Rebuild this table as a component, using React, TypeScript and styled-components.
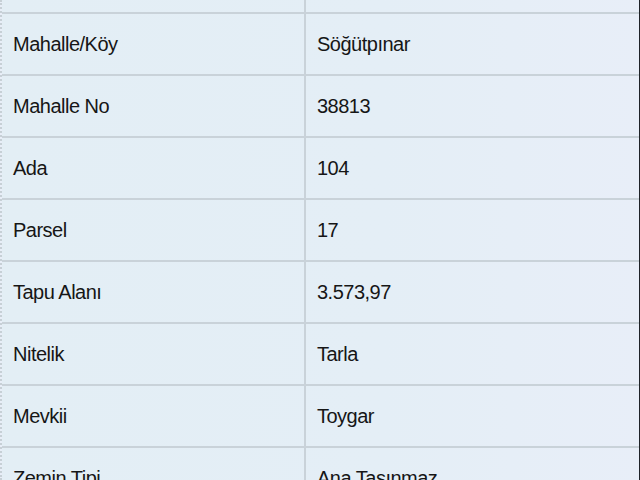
import styled, { createGlobalStyle } from "styled-components";

const GlobalStyle = createGlobalStyle`
	html, body {
		margin: 0;
		padding: 0;
		background: #e5eef6;
		overflow: hidden;
	}
	body {
		font-family: "Liberation Sans", Arial, sans-serif;
	}
`;

const rows: [string, string][] = [
	["", ""],
	["Mahalle/Köy", "Söğütpınar"],
	["Mahalle No", "38813"],
	["Ada", "104"],
	["Parsel", "17"],
	["Tapu Alanı", "3.573,97"],
	["Nitelik", "Tarla"],
	["Mevkii", "Toygar"],
	["Zemin Tipi", "Ana Taşınmaz"],
];

export default function App() {
	return (
		<>
			<GlobalStyle />
			<Frame>
				<InfoTable>
					<tbody>
						{rows.map(([label, value], i) => (
							<Row key={i}>
								<Cell $label>{label}</Cell>
								<Cell>{value}</Cell>
							</Row>
						))}
					</tbody>
				</InfoTable>
			</Frame>
		</>
	);
}

const Frame = styled.div`
	width: 640px;
	height: 480px;
	overflow: hidden;
	box-sizing: border-box;
	border-right: 1px solid #1e2228;
	border-left: 2px dotted #c7d0d6;
	background: linear-gradient(90deg, #e3eef5 0%, #e4eef6 60%, #e8eef8 100%);
`;

const InfoTable = styled.table`
	width: 100%;
	margin-top: -50px;
	border-collapse: collapse;
	table-layout: fixed;
`;

const Row = styled.tr`
	height: 62px;
`;

const Cell = styled.td<{ $label?: boolean }>`
	width: ${(p) => (p.$label ? "291px" : "auto")};
	padding: 0 0 0 11px;
	border-top: 2px solid #c9d2d9;
	border-bottom: 2px solid #c9d2d9;
	border-right: ${(p) => (p.$label ? "2px solid #c9d2d9" : "none")};
	font-size: 20px;
	letter-spacing: -0.5px;
	color: #161616;
	vertical-align: middle;
	white-space: nowrap;
`;
